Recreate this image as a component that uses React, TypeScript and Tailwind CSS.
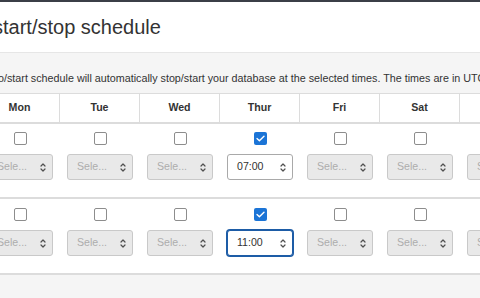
import React from 'react';

type Slot = { checked: boolean; value?: string; focused?: boolean };

const days = ['Mon', 'Tue', 'Wed', 'Thur', 'Fri', 'Sat', 'Sun'];

const rows: Slot[][] = [
  days.map((d) => (d === 'Thur' ? { checked: true, value: '07:00' } : { checked: false })),
  days.map((d) => (d === 'Thur' ? { checked: true, value: '11:00', focused: true } : { checked: false })),
];

const Chevrons = () => (
  <svg width="6" height="11" viewBox="0 0 6 11" fill="none" stroke="#505050" strokeWidth="1.2" strokeLinecap="round" strokeLinejoin="round">
    <path d="M1 4 L3 2 L5 4" />
    <path d="M1 7 L3 9 L5 7" />
  </svg>
);

const Checkbox = ({ checked }: { checked: boolean }) =>
  checked ? (
    <div className="w-[13px] h-[13px] rounded-[2px] bg-[#1b74d6] flex items-center justify-center">
      <svg width="9" height="7" viewBox="0 0 9 7" fill="none" stroke="white" strokeWidth="1.4" strokeLinecap="round" strokeLinejoin="round">
        <path d="M1 3.6 L3.4 5.8 L8 1.2" />
      </svg>
    </div>
  ) : (
    <div className="w-[13px] h-[13px] rounded-[2px] border border-[#8d8d8d] bg-white" />
  );

const TimeSelect = ({ slot }: { slot: Slot }) => {
  const enabled = !!slot.value;
  return (
    <div
      className={`w-[66px] h-[26px] rounded-[3px] border flex items-center justify-between pl-[9px] pr-[6px] ${
        enabled
          ? slot.focused
            ? 'bg-white border-[#1d5ca6] shadow-[0_0_0_1px_#1d5ca6] text-[#333]'
            : 'bg-white border-[#a9a9a9] text-[#333]'
          : 'bg-[#e9e9e9] border-[#c9c9c9] text-[#adadad]'
      }`}
    >
      <span>{slot.value ?? 'Sele...'}</span>
      <Chevrons />
    </div>
  );
};

export default function App() {
  return (
    <div className="w-[480px] h-[298px] overflow-hidden bg-[#f5f5f5] text-[#333] font-['Liberation_Sans',Arial,sans-serif]">
      <div className="h-[2px] bg-[#3b3f47]" />
      <div className="h-[51px] bg-white border-b border-[#e6e6e6] flex items-center">
        <h1 className="ml-[-7px] text-[20px] leading-[28px] whitespace-nowrap">start/stop schedule</h1>
      </div>

      <div className="h-[40px] pt-[18px] text-[10.75px] leading-[14px] whitespace-nowrap ml-[-2px]">
        o/start schedule will automatically stop/start your database at the selected times. The times are in UTC.
      </div>

      <div className="bg-white border-t border-[#dcdcdc] ml-[-20px] w-[560px] text-[10.6px]">
        {/* Header */}
        <div className="grid grid-cols-[repeat(7,80px)] border-b-2 border-[#dcdcdc]">
          {days.map((d) => (
            <div key={d} className="h-[28px] flex items-center justify-center font-bold border-r border-[#dcdcdc]">
              {d}
            </div>
          ))}
        </div>

        {/* Rows */}
        {rows.map((row, i) => (
          <div
            key={i}
            className={`grid grid-cols-[repeat(7,80px)] border-b-2 border-[#dcdcdc] pb-[17px] ${i === 0 ? 'pt-[8px]' : 'pt-[9px]'}`}
          >
            {row.map((slot, j) => (
              <div key={j} className="flex flex-col items-center gap-[9px]">
                <Checkbox checked={slot.checked} />
                <TimeSelect slot={slot} />
              </div>
            ))}
          </div>
        ))}
      </div>
    </div>
  );
}
